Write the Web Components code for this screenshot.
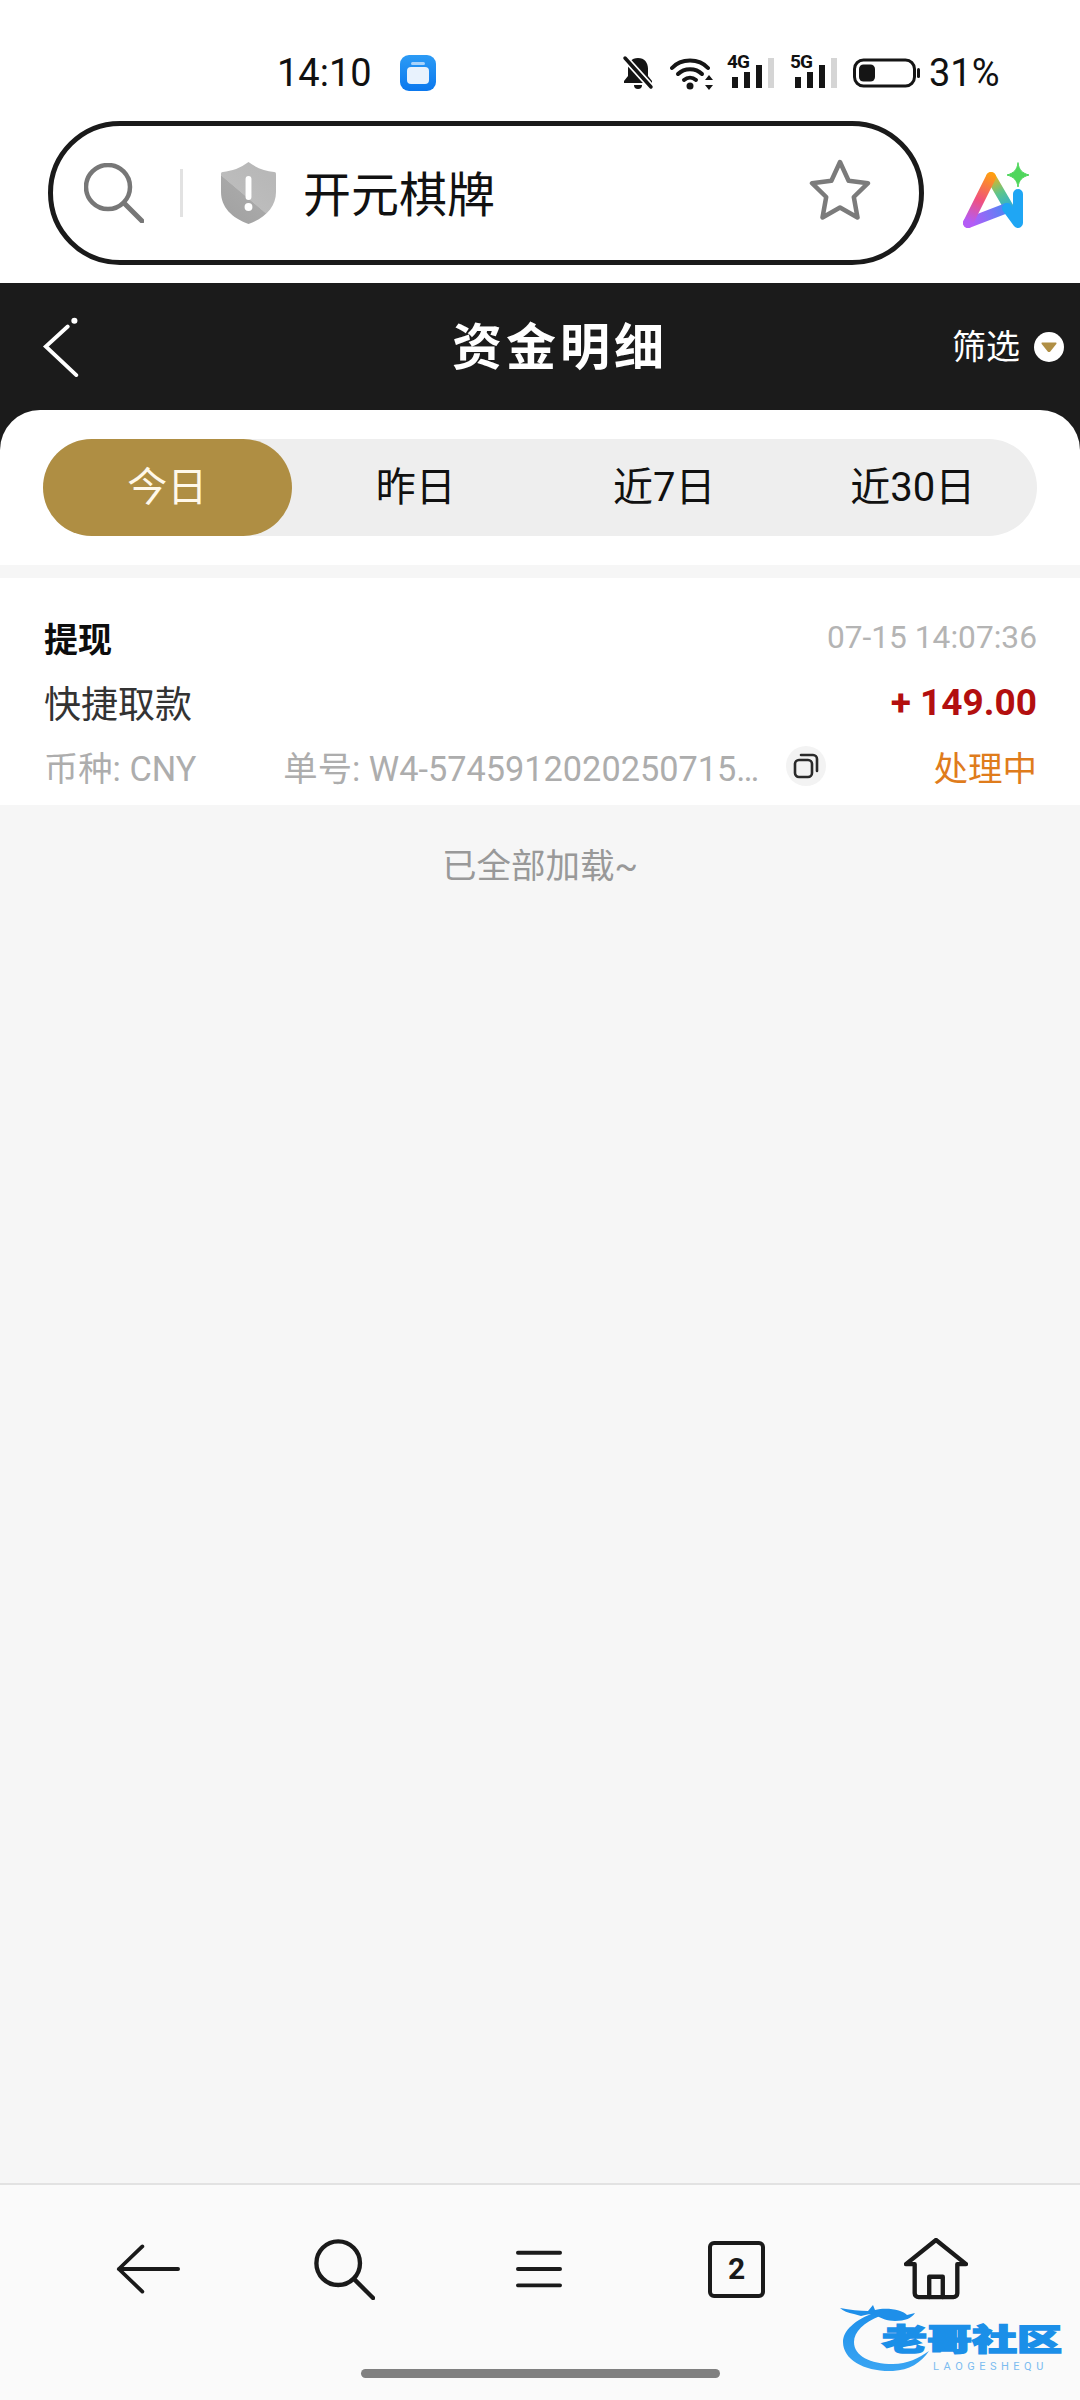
<!DOCTYPE html>
<html lang="zh"><head><meta charset="utf-8"><title>资金明细</title>
<style>
html,body{margin:0;padding:0;background:#f6f6f6}
body{width:1080px;height:2400px;overflow:hidden;font-family:Roboto,"Noto Sans CJK SC",sans-serif;display:flex;flex-direction:column}
</style></head><body>
<status-bar></status-bar>
<search-row></search-row>
<page-header title="资金明细"></page-header>
<range-tabs></range-tabs>
<main-list></main-list>
<bottom-nav></bottom-nav>
<script>
function def(name,html){customElements.define(name,class extends HTMLElement{constructor(){super();this.attachShadow({mode:'open'}).innerHTML=typeof html==='function'?html(this):html}})}
def('status-bar',`<style>:host{display:flex;align-items:center;height:121px;flex:none;background:#fff;color:#111;padding-left:277px;padding-top:24px;box-sizing:border-box;position:relative}
.t{font-size:38px;line-height:48px;width:123px}
svg{display:block;flex:none}.s{position:relative;width:46px;height:36px;flex:none}
.s b{position:absolute;left:-1px;top:-3px;font-size:19px;line-height:20px;font-weight:700;letter-spacing:-1px;color:#111}
.s svg{position:absolute;left:0;top:0}
</style>
<span class="t">14:10</span>
<svg width="36" height="36" viewBox="0 0 36 36"><defs><linearGradient id="b" x1="0" y1="0" x2="0" y2="1"><stop offset="0" stop-color="#2c9bf5"/><stop offset="1" stop-color="#0b78ee"/></linearGradient></defs><rect width="36" height="36" rx="9" fill="url(#b)"/><rect x="7" y="12" width="22" height="17" rx="4" fill="#e8f2fd"/><rect x="11" y="7" width="14" height="3" rx="1.5" fill="#a9d3fa"/></svg>
<svg style="margin-left:185px" width="34" height="36" viewBox="0 0 34 36"><path d="M17 3c-6.500 0-10 4.800-10 10.500V21l-4 5v2h28v-2l-4-5v-7.500C27 7.800 23.500 3 17 3z" fill="#151515"/><path d="M13 30h8a4 4 0 0 1-8 0z" fill="#151515"/><path d="M3 2l28 31" stroke="#fff" stroke-width="7"/><path d="M4 3l26 29" stroke="#151515" stroke-width="3.500" stroke-linecap="round"/></svg>
<svg style="margin-left:15px" width="44" height="36" viewBox="0 0 44 36" fill="none" stroke="#151515" stroke-linecap="round"><path d="M2 13C11 3 29 3 38 13" stroke-width="4"/><path d="M8 19c6.500-6.500 17.500-6.500 24 0" stroke-width="4"/><path d="M14 25c3.500-3 8.500-3 12 0" stroke-width="4"/><circle cx="20" cy="31" r="3.500" fill="#151515" stroke="none"/><path d="M39 20l-4 5h8zM39 35l-4-5h8z" fill="#151515" stroke="none"/></svg>
<span class="s" style="margin-left:14px"><svg width="46" height="36" viewBox="0 0 46 36"><rect x="4" y="22" width="6" height="11" fill="#151515"/><rect x="16" y="17" width="6" height="16" fill="#151515"/><rect x="28" y="10" width="6" height="23" fill="#151515"/><rect x="40" y="3" width="6" height="30" fill="#d5d5d5"/></svg><b>4G</b></span>
<span class="s" style="margin-left:17px"><svg width="46" height="36" viewBox="0 0 46 36"><rect x="4" y="22" width="6" height="11" fill="#151515"/><rect x="16" y="17" width="6" height="16" fill="#151515"/><rect x="28" y="10" width="6" height="23" fill="#151515"/><rect x="40" y="3" width="6" height="30" fill="#d5d5d5"/></svg><b>5G</b></span>
<svg style="margin-left:16px" width="67" height="30" viewBox="0 0 67 30"><rect x="1.500" y="2" width="60" height="26" rx="9" fill="none" stroke="#151515" stroke-width="3"/><rect x="6" y="6.500" width="16" height="17" rx="4.500" fill="#151515"/><rect x="64" y="10" width="3" height="10" rx="1.500" fill="#151515"/></svg>
<span style="font-size:38px;line-height:48px;margin-left:9px">31%</span>`);

def('search-row',`<style>:host{display:flex;align-items:flex-start;height:162px;flex:none;background:#fff;padding-left:48px;box-sizing:border-box;position:relative}
.pill{width:876px;height:144px;box-sizing:border-box;border:5px solid #1a1a1a;border-radius:72px;display:flex;align-items:center;background:#fff}
svg{display:block;flex:none}
.q{font-size:48px;line-height:60px;color:#111;margin-left:27px;width:506px;white-space:nowrap;padding-top:6px}
.ai{margin-left:38px;margin-top:41px}
</style><div class="pill">
<svg style="margin-left:31px" width="60" height="60" viewBox="0 0 60 60" fill="none" stroke="#777" stroke-width="4.500" stroke-linecap="round"><circle cx="24" cy="24" r="22"/><path d="M41 41l17 17" stroke-width="5"/></svg>
<span style="width:3px;height:48px;background:#e2e2e2;margin-left:36px;flex:none"></span>
<svg style="margin-left:38px" width="55" height="62" viewBox="0 0 56 62" preserveAspectRatio="none"><defs><linearGradient id="sh" x1="0.200" y1="1" x2="0.800" y2="0.200"><stop offset="0" stop-color="#a2a2a2"/><stop offset="0.500" stop-color="#a8a8a8"/><stop offset="0.510" stop-color="#bcbcbc"/><stop offset="1" stop-color="#b8b8b8"/></linearGradient></defs><path d="M28 0C36 6 45 9 54 10c2 0 2 1 2 3v17c0 15-11 26-28 32C11 56 0 45 0 30V13c0-2 0-3 2-3C11 9 20 6 28 0z" fill="url(#sh)"/><rect x="25" y="14" width="6" height="24" rx="3" fill="#fff"/><circle cx="28" cy="45" r="4" fill="#fff"/></svg>
<span class="q">开元棋牌</span>
<svg width="62" height="62" viewBox="0 0 62 62" fill="none" stroke="#7b7b7b" stroke-width="4.500" stroke-linejoin="round" style="margin-top:-6px"><path d="M31 3l8.600 18.800L59 24.200 44.800 38l3.700 20.500L31 48.500l-17.500 10L17.200 38 3 24.200l19.400-2.400z"/></svg>
</div>
<svg class="ai" width="68" height="68" viewBox="960 160 68 68" fill="none" stroke-width="10" stroke-linecap="round" stroke-linejoin="round"><defs>
<linearGradient id="a1" gradientUnits="userSpaceOnUse" x1="968" y1="220" x2="990" y2="172"><stop offset="0" stop-color="#b45cf5"/><stop offset="0.450" stop-color="#f0507e"/><stop offset="1" stop-color="#ff9f10"/></linearGradient>
<linearGradient id="a2" gradientUnits="userSpaceOnUse" x1="990" y1="172" x2="1010" y2="212"><stop offset="0" stop-color="#ffb010"/><stop offset="0.450" stop-color="#5dc58a"/><stop offset="1" stop-color="#1ea4f5"/></linearGradient>
<linearGradient id="a3" gradientUnits="userSpaceOnUse" x1="968" y1="220" x2="1010" y2="205"><stop offset="0" stop-color="#b85af8"/><stop offset="1" stop-color="#3e8df4"/></linearGradient>
</defs><path d="M989 175l21 36" stroke="url(#a2)"/><path d="M966 221l39-15" stroke="url(#a3)"/><path d="M966 221l23-46" stroke="url(#a1)"/><path d="M1005 206l11 15v-29" stroke="#1fa6f4"/><path d="M1016 161c1 7 4 10 11 12-7 2-10 5-11 12-1-7-4-10-11-12 7-2 10-5 11-12z" fill="#4fd65c" stroke="#4fd65c" stroke-width="1"/></svg>`);

def('page-header',el=>`<style>:host{display:flex;align-items:center;justify-content:center;height:127px;flex:none;background:#1b1b1b;color:#fff;position:relative;box-sizing:border-box}
h1{margin:0;font-size:50px;line-height:60px;font-weight:700;letter-spacing:4px;padding-left:40px;padding-top:3px}
.l,.r{position:absolute;top:0;bottom:0;display:flex;align-items:center}
.l{left:42px}.r{right:16px;font-size:34px;line-height:44px;gap:14px}svg{display:block}
</style><div class="l"><svg width="40" height="61" viewBox="0 0 40 64" fill="none" stroke="#fff" stroke-width="4" stroke-linecap="round"><path d="M26 11L3 32l32 30"/><circle cx="33" cy="5" r="3.200" fill="#fff" stroke="none"/></svg></div>
<h1>${el.getAttribute('title')||''}</h1>
<div class="r"><span>筛选</span><svg width="30" height="30" viewBox="0 0 30 30"><circle cx="15" cy="15" r="15" fill="#fff"/><path d="M8.500 10.500h13c1 0 1.300.7.800 1.500l-6 7.500c-.7.800-1.900.8-2.600 0l-6-7.500c-.5-.8-.2-1.500.8-1.500z" fill="#b08f45"/></svg></div>`);

def('range-tabs',`<style>:host{display:block;flex:none;background:#1b1b1b}
.sheet{background:#fff;border-radius:40px 40px 0 0;padding:29px 43px;height:155px;box-sizing:border-box}
.track{display:grid;grid-template-columns:repeat(4,1fr);height:97px;background:#eee;border-radius:49px;color:#111;font-size:40px;text-align:center;line-height:97px}
.on{background:#af8e43;color:#fff8ea;border-radius:49px}</style>
<div class="sheet"><div class="track"><span class="on">今日</span><span>昨日</span><span>近7日</span><span>近30日</span></div></div>`);

def('record-card',`<style>:host{display:block;background:#fff;padding:38px 43px 17px 44px;height:227px;box-sizing:border-box}
.row{display:flex;align-items:center;justify-content:space-between;height:42px;margin-bottom:23px;white-space:nowrap}
.row.two{margin-bottom:22px}
.row:last-child{margin:0;justify-content:flex-start}
.k{font-size:34px;font-weight:700;color:#0d0d0d}
.time{font-size:31.700px;color:#b4b4b4}
.m{font-size:37px;color:#333}
.amt{font-size:37px;font-weight:700;color:#b30f0f}
.g{font-size:34.300px;color:#adadad}
.no{width:478px;margin-left:87px}
.c{width:40px;height:40px;border-radius:50%;background:#f3f3f3;display:flex;align-items:center;justify-content:center;margin-left:25px;flex:none}
.st{font-size:34.500px;color:#df7c1c;margin-left:auto}</style>
<div class="row"><span class="k">提现</span><span class="time">07-15 14:07:36</span></div>
<div class="row two"><span class="m">快捷取款</span><span class="amt">+ 149.00</span></div>
<div class="row"><span class="g">币种: CNY</span><span class="g no">单号: W4-5745912020250715…</span><span class="c"><svg width="26" height="26" viewBox="0 0 26 26" fill="none" stroke="#2a2a2a" stroke-width="2.600" stroke-linecap="round"><rect x="2" y="7" width="17" height="17" rx="4"/><path d="M8 2h12a4 4 0 0 1 4 4v12"/></svg></span><span class="st">处理中</span></div>`);

def('main-list',`<style>:host{display:block;flex:1;background:#f6f6f6;padding-top:13px;min-height:0}
.end{font-size:34.500px;line-height:50px;color:#999;text-align:center;padding-top:36px}</style>
<record-card></record-card><div class="end">已全部加载~</div>`);

def('bottom-nav',`<style>:host{display:block;flex:none;height:217px;background:#fafafa;border-top:2px solid #e2e2e2;box-sizing:border-box;position:relative}
.icons{display:grid;grid-template-columns:repeat(5,197px);padding:51px 0 0 50px;height:66px;align-items:center;justify-items:center;color:#1a1a1a}
svg{display:block}
.tab{width:57px;height:57px;box-sizing:border-box;border:4px solid #1a1a1a;border-radius:6px;display:flex;align-items:center;justify-content:center;font-size:30px;font-weight:700;line-height:1;margin-left:-6px}
.pill{position:absolute;left:361px;top:184px;width:359px;height:9px;border-radius:5px;background:#808080}
water-mark{position:absolute;left:840px;top:117px}</style>
<div class="icons">
<svg style="margin-left:-2px" width="64" height="52" viewBox="0 0 68 54" fill="none" stroke="#1a1a1a" stroke-width="4" stroke-linecap="round" stroke-linejoin="round"><path d="M66 27H3M28 3L3 27l25 24"/></svg>
<svg width="62" height="62" viewBox="0 0 64 64" fill="none" stroke="#1a1a1a" stroke-width="4.500" stroke-linecap="round" style="margin-left:-3px"><circle cx="26" cy="26" r="22.500"/><path d="M43 43l19 19"/></svg>
<svg width="46" height="40" viewBox="0 0 48 40" stroke="#1a1a1a" stroke-width="4" stroke-linecap="round" style="margin-left:-8px"><path d="M2 3h44M2 20h44M2 37h44"/></svg>
<div class="tab">2</div>
<svg width="64" height="62" viewBox="0 0 66 64" fill="none" stroke="#1a1a1a" stroke-width="4.500" stroke-linecap="round" stroke-linejoin="round" style="margin-left:-2px"><path d="M2 27L33 2l31 25H55v30a4 4 0 0 1-4 4H15a4 4 0 0 1-4-4V27z"/><path d="M26 61V40h14v21"/></svg>
</div>
<div class="pill"></div><water-mark></water-mark>`);

def('water-mark',`<style>:host{display:block;width:224px;height:72px}
.w{position:relative;width:224px;height:72px}
svg{position:absolute;left:0;top:0}
.a{position:absolute;left:42px;top:18px;font-size:30px;line-height:40px;font-weight:900;white-space:nowrap;color:#1b8fe8;-webkit-text-stroke:1.500px #1b8fe8;transform-origin:0 50%;transform:scaleX(1.5)}
.b{position:absolute;left:93px;top:59px;font-size:11px;line-height:12px;letter-spacing:4.500px;color:#7cbcf0;white-space:nowrap}</style>
<div class="w"><svg width="224" height="72" viewBox="0 0 224 72" fill="none"><defs><linearGradient id="wg" x1="0" y1="0" x2="0" y2="1"><stop offset="0" stop-color="#1e90ea"/><stop offset="1" stop-color="#3aa5f3"/></linearGradient></defs>
<path d="M36 10C14 18 3 29 3 40c0 18 22 30 50 29 16-1 28-8 36-20-10 7-22 13-36 13C30 62 14 54 14 40c0-10 10-20 26-26z" fill="url(#wg)"/>
<path d="M0 6c10 2 20 3 28 3l5-6 2 5c12-3 28 0 32 5l8-2c-3 5-10 8-20 8-8 0-14-3-20-6-6-2-10 0-14 1L14 12C8 11 3 9 0 6z" fill="#1e8fe9"/></svg>
<span class="a">老哥社区</span><span class="b">LAOGESHEQU</span></div>`);
</script></body></html>
